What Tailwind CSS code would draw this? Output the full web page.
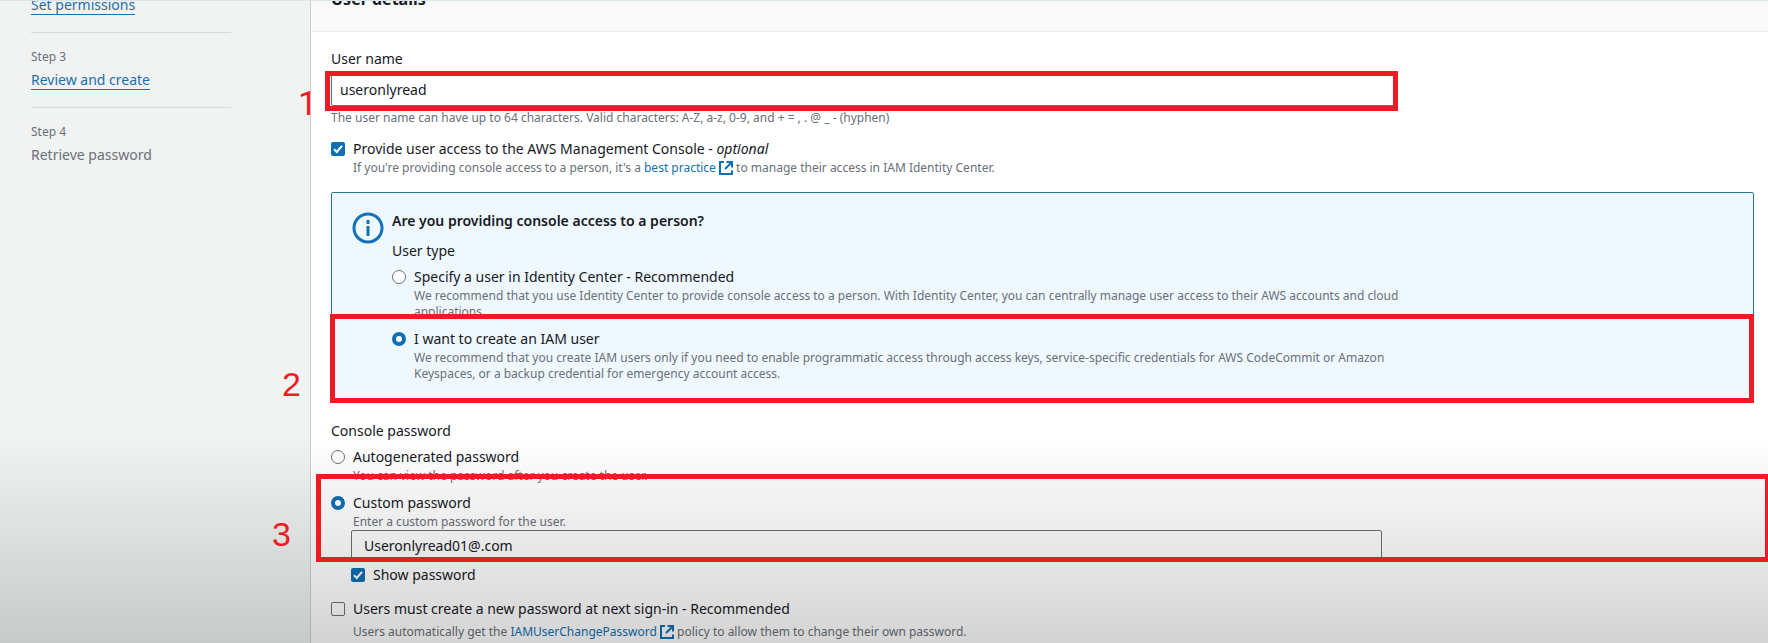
<!DOCTYPE html>
<html lang="en">
<head>
<meta charset="utf-8">
<meta name="viewport" content="width=device-width, initial-scale=1">
<title>Create user</title>
<script src="https://cdn.jsdelivr.net/npm/@tailwindcss/browser@4"></script>
</head>
<body class="bg-white">
<div class="relative flex min-h-screen overflow-hidden font-['Noto_Sans',sans-serif] text-[14px] leading-5 text-[#16191f]">

  <!-- Wizard steps -->
  <nav aria-label="Steps" class="w-[311px] shrink-0 border-r border-[#c9cdcd] bg-[#f1f3f3] pl-[31px] pr-[79px]">
    <ol>
      <li class="flex h-[33px] items-start border-b border-[#d5dbdb]">
        <a href="#" class="-mt-1 block h-[19px] w-fit border-b border-[#1a73b0] leading-[18px] text-[#1a6fad]">Set permissions</a>
      </li>
      <li class="border-b border-[#d5dbdb] pt-4 pb-[17px]">
        <div class="text-[12px] leading-4 text-[#687078]">Step 3</div>
        <a href="#" class="mt-1.5 block h-[19px] w-fit border-b border-[#1a73b0] leading-[18px] text-[#1a6fad]">Review and create</a>
      </li>
      <li class="pt-4">
        <div class="text-[12px] leading-4 text-[#687078]">Step 4</div>
        <div class="mt-1.5 leading-[18px] text-[#687078]">Retrieve password</div>
      </li>
    </ol>
  </nav>

  <main class="min-w-0 flex-1">
    <header class="h-8 overflow-hidden border-b border-[#eaeded] bg-[#fafafa] pl-5">
      <h2 class="-mt-[13px] text-[16px] leading-6 font-bold">User details</h2>
    </header>

    <form class="pt-[17px] pr-3.5 pb-[3px] pl-5">
      <label for="username" class="block">User name</label>
      <div class="relative mt-1 w-3/4">
        <input id="username" type="text" value="useronlyread" class="block h-[33px] w-full rounded-xs border border-[#687078] bg-white px-2 outline-none">
        <div class="absolute -top-0.5 right-0 -bottom-[5px] -left-1.5 z-20 border-5 border-[#ed1c24]"></div>
        <span class="absolute top-3 right-full z-20 mr-3.5 font-['Roboto',sans-serif] text-[34px] leading-9 text-[#ed1c24]">1</span>
      </div>
      <p class="mt-1 text-[12px] leading-4 text-[#687078]">The user name can have up to 64 characters. Valid characters: A-Z, a-z, 0-9, and + = , . @ _ - (hyphen)</p>

      <div class="mt-[13px] flex items-center gap-2">
        <span class="relative size-3.5">
          <input id="console" type="checkbox" checked class="block size-3.5 appearance-none rounded-xs bg-[#0f6fb5]">
          <svg class="pointer-events-none absolute inset-0 size-3.5" viewBox="0 0 14 14" fill="none" stroke="#fff" stroke-width="2"><path d="M3 7.2 5.8 10 11 3.8"/></svg>
        </span>
        <label for="console">Provide user access to the AWS Management Console - <i>optional</i></label>
      </div>
      <p class="mt-px ml-[22px] text-[12px] leading-4 text-[#687078]">If you're providing console access to a person, it's a <a href="#" class="text-[#1270b0]">best practice <svg class="inline size-3.5 align-[-3px]" viewBox="0 0 14 14" fill="none" stroke="currentColor" stroke-width="2"><path d="M5 1H1v12h12V9.5M7.5 1H13v5.5M12.5 1.5 6 8"/></svg></a> to manage their access in IAM Identity Center.</p>

      <section class="relative mt-4 flex rounded-xs border border-[#2f7396] bg-[#f0f8ff] pt-[18px] pb-4 pl-5">
        <svg class="mt-px mr-2 size-8 shrink-0 text-[#1272b5]" viewBox="0 0 32 32" fill="none" stroke="currentColor"><circle cx="16" cy="16" r="14" stroke-width="3"/><path d="M16 8v4M16 14v10" stroke-width="3"/></svg>
        <div class="w-3/4">
          <h3 class="font-semibold">Are you providing console access to a person?</h3>
          <fieldset>
            <legend class="pt-2.5">User type</legend>
            <div class="mt-1.5 flex items-center gap-2">
              <input id="idc" type="radio" name="usertype" class="size-3.5 appearance-none rounded-full border border-[#687078] bg-white">
              <label for="idc">Specify a user in Identity Center - Recommended</label>
            </div>
            <p class="mt-px ml-[22px] max-w-[1000px] text-[12px] leading-4 text-[#687078]">We recommend that you use Identity Center to provide console access to a person. With Identity Center, you can centrally manage user access to their AWS accounts and cloud applications.</p>
            <div class="mt-[9px] flex items-center gap-2">
              <input id="iam" type="radio" name="usertype" checked class="size-3.5 appearance-none rounded-full border-4 border-[#0f6fb5] bg-white">
              <label for="iam">I want to create an IAM user</label>
            </div>
            <p class="mt-px ml-[22px] max-w-[1000px] text-[12px] leading-4 text-[#687078]">We recommend that you create IAM users only if you need to enable programmatic access through access keys, service-specific credentials for AWS CodeCommit or Amazon Keyspaces, or a backup credential for emergency account access.</p>
          </fieldset>
        </div>
        <div class="absolute -right-px -bottom-[5px] -left-0.5 z-20 h-[89px] border-5 border-[#ed1c24]"></div>
        <span class="absolute -bottom-1 right-full z-20 mr-[31px] font-['Liberation_Sans',sans-serif] text-[34px] leading-9 text-[#ed1c24]">2</span>
      </section>

      <fieldset>
        <legend class="pt-[22px]">Console password</legend>
        <div class="mt-1.5 flex items-center gap-2">
          <input id="auto" type="radio" name="pw" class="size-3.5 appearance-none rounded-full border border-[#687078] bg-white">
          <label for="auto">Autogenerated password</label>
        </div>
        <p class="mt-px ml-[22px] text-[12px] leading-4 text-[#687078]">You can view the password after you create the user.</p>
        <div class="relative mt-[9px]">
          <div class="flex items-center gap-2">
            <input id="custom" type="radio" name="pw" checked class="size-3.5 appearance-none rounded-full border-4 border-[#0f6fb5] bg-white">
            <label for="custom">Custom password</label>
          </div>
          <label for="password" class="mt-px ml-[22px] block text-[12px] leading-4 text-[#687078]">Enter a custom password for the user.</label>
          <div class="w-3/4 pr-4 pl-5">
            <input id="password" type="text" value="Useronlyread01@.com" class="block h-8 w-full rounded-xs border border-[#687078] bg-white px-3 pb-0.5 outline-none">
          </div>
          <div class="absolute -top-[19px] -right-4 bottom-0 -left-[15px] z-20 border-5 border-[#ed1c24]"></div>
          <span class="absolute top-[23px] right-full z-20 mr-10 font-['Liberation_Sans',sans-serif] text-[34px] leading-9 text-[#ed1c24]">3</span>
        </div>
      </fieldset>

      <div class="mt-[3px] ml-5 flex items-center gap-2">
        <span class="relative size-3.5">
          <input id="show" type="checkbox" checked class="block size-3.5 appearance-none rounded-xs bg-[#0f6fb5]">
          <svg class="pointer-events-none absolute inset-0 size-3.5" viewBox="0 0 14 14" fill="none" stroke="#fff" stroke-width="2"><path d="M3 7.2 5.8 10 11 3.8"/></svg>
        </span>
        <label for="show">Show password</label>
      </div>

      <div class="mt-3.5 flex items-center gap-2">
        <input id="reset" type="checkbox" class="size-3.5 appearance-none rounded-xs border border-[#687078] bg-white">
        <label for="reset">Users must create a new password at next sign-in - Recommended</label>
      </div>
      <p class="mt-[5px] ml-[22px] text-[12px] leading-4 text-[#687078]">Users automatically get the <a href="#" class="text-[#1270b0]">IAMUserChangePassword <svg class="inline size-3.5 align-[-3px]" viewBox="0 0 14 14" fill="none" stroke="currentColor" stroke-width="2"><path d="M5 1H1v12h12V9.5M7.5 1H13v5.5M12.5 1.5 6 8"/></svg></a> policy to allow them to change their own password.</p>
    </form>
  </main>

  <!-- Edge shading -->
  <div class="pointer-events-none absolute inset-x-0 top-0 z-10 h-px bg-[#d9e5ec]"></div>
  <div class="pointer-events-none absolute inset-x-0 bottom-0 z-10 h-52 bg-linear-to-b from-black/0 to-black/17"></div>
</div>
</body>
</html>
